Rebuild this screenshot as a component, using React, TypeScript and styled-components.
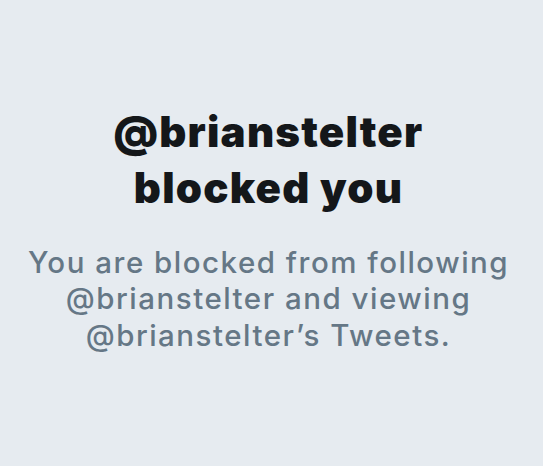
import styled, { createGlobalStyle } from 'styled-components';

const GlobalStyle = createGlobalStyle`
    html, body {
        margin: 0;
        padding: 0;
        background: #e6ebf0;
    }
`;

const Screen = styled.div`
    box-sizing: border-box;
    width: 100vw;
    height: 100vh;
    padding: 0 6px 9px 0;
    display: flex;
    flex-direction: column;
    align-items: center;
    justify-content: center;
    background: #e6ebf0;
    font-family: Inter, "Liberation Sans", sans-serif;
    text-align: center;
`;

const Title = styled.h1`
    margin: 0 0 28px;
    font-size: 42px;
    line-height: 56px;
    font-weight: 900;
    letter-spacing: 1.2px;
    color: #14171a;
`;

const Message = styled.p`
    margin: 0;
    padding: 0 6px;
    font-size: 29.5px;
    line-height: 36.5px;
    font-weight: 500;
    letter-spacing: 1.5px;
    color: #657786;
`;

export default function App() {
    return (
        <Screen>
            <GlobalStyle/>
            <Title>@brianstelter<br/>blocked you</Title>
            <Message>
                You are blocked from following @brianstelter and viewing @brianstelter’s Tweets.
            </Message>
        </Screen>
    )
};
